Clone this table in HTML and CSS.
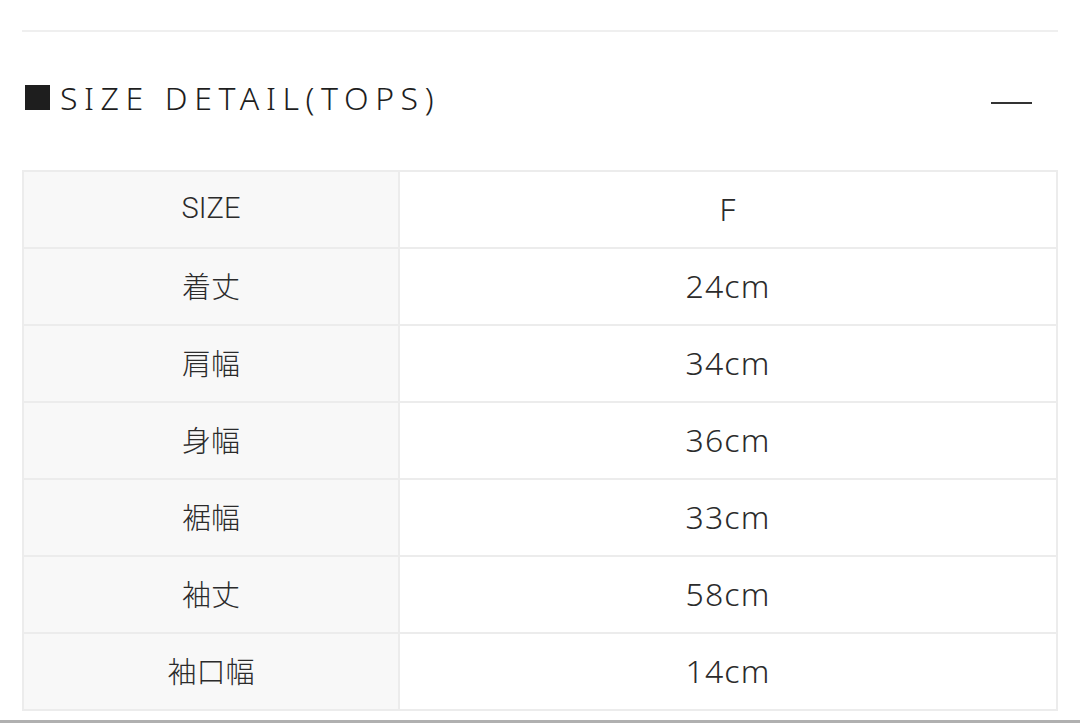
FILE: index.html
```html
<!DOCTYPE html>
<html lang="ja">
<head>
<meta charset="utf-8">
<link rel="stylesheet" href="styles.css">
</head>
<body>
<div class="wrap">
  <div class="topline"></div>
  <div class="head">
    <h2 class="title"><span class="sq"></span>SIZE DETAIL(TOPS)</h2>
    <span class="minus"></span>
  </div>
  <table class="size">
    <tr><th>SIZE</th><td>F</td></tr>
    <tr><th>着丈</th><td>24cm</td></tr>
    <tr><th>肩幅</th><td>34cm</td></tr>
    <tr><th>身幅</th><td>36cm</td></tr>
    <tr><th>裾幅</th><td>33cm</td></tr>
    <tr><th>袖丈</th><td>58cm</td></tr>
    <tr><th>袖口幅</th><td>14cm</td></tr>
  </table>
</div>
<div class="bottomline"></div>
</body>
</html>
```
FILE: styles.css
```css
html, body {
  margin: 0;
  padding: 0;
  background: #fff;
}
body {
  font-family: "Noto Sans", "Noto Sans CJK JP", sans-serif;
  color: #2b2b2b;
  height: 723px;
  overflow: hidden;
}
.wrap {
  padding: 30px 22px 0;
}
.topline {
  height: 2px;
  background: #efefef;
}
.head {
  display: flex;
  align-items: center;
  justify-content: space-between;
  height: 138px;
}
.title {
  display: flex;
  align-items: center;
  margin: 0 0 8px 3px;
  font-family: "Noto Sans", sans-serif;
  font-weight: 300;
  font-size: 32px;
  letter-spacing: 6.6px;
  color: #1e1e1e;
}
.sq {
  display: inline-block;
  width: 25px;
  height: 25px;
  background: #1e1e1e;
  margin-right: 10px;
  margin-top: 1px;
}
.minus {
  display: block;
  width: 41px;
  height: 2px;
  background: #333;
  margin-right: 26px;
  margin-top: 4px;
}
.size {
  width: 100%;
  border-collapse: collapse;
  border: 2px solid #ececec;
}
.size th, .size td {
  height: 72px;
  border: 2px solid #ececec;
  text-align: center;
  vertical-align: middle;
  padding: 0 0 3px;
  color: #2b2b2b;
}
.size th {
  width: 374px;
  background: #f8f8f8;
  font-family: "Roboto", "Noto Sans CJK JP", sans-serif;
  font-size: 29px;
  font-weight: 300;
}
.size td {
  font-family: "Noto Sans", sans-serif;
  font-size: 32px;
  font-weight: 300;
  letter-spacing: 1.2px;
  background: #fff;
}
.bottomline {
  position: absolute;
  left: 0;
  right: 0;
  top: 720px;
  height: 3px;
  background: #b0b0b0;
}
```
